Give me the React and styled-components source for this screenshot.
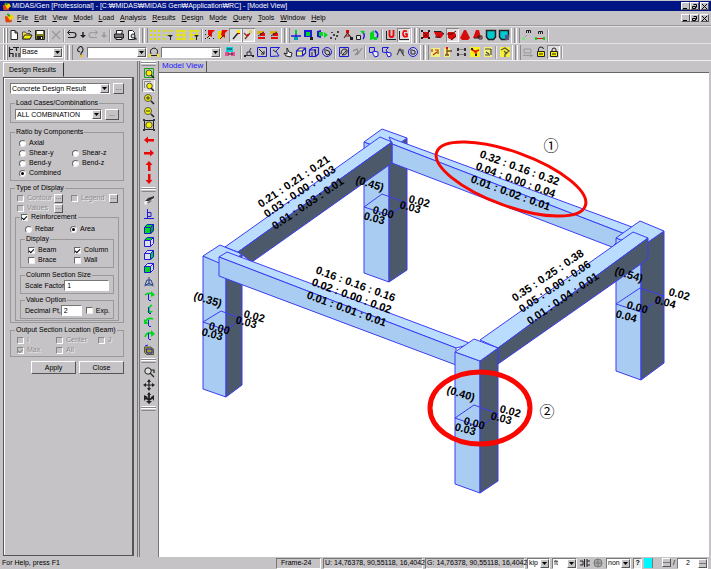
import React from "react";
import styled, { createGlobalStyle, css } from "styled-components";

const GlobalStyle = createGlobalStyle`
  * { box-sizing: border-box; }
  body { margin: 0; background: #c6c3c6; }
  body, button, input, select, legend {
    font-family: "Liberation Sans", "Noto Sans CJK KR", sans-serif;
    font-size: 7px;
    line-height: 8px;
    color: #000;
  }
`;

const face = "#c6c3c6";
const raised = css`border: 1px solid; border-color: #fff #555 #555 #fff;`;
const sunken = css`border: 1px solid; border-color: #777 #fff #fff #777;`;

const Shell = styled.div`
  display: flex;
  flex-direction: column;
  min-height: 100vh;
  background: ${face};
  padding-top: 1px;
`;

/* ---------- title and menu ---------- */
const TitleBar = styled.header`
  display: flex;
  align-items: center;
  height: 10px;
  padding: 0 2px;
  gap: 1px;
  background: #001484;
  color: #fff;
  white-space: nowrap;
`;
const Spacer = styled.span`flex: 1;`;
const WindowButtons = styled.div`display: flex;`;
const WindowButton = styled.button`
  ${raised}
  width: 9px;
  height: 8px;
  padding: 0;
  margin-left: ${(p) => (p.$apart ? 1 : 0)}px;
  background: ${face};
  display: grid;
  place-items: center;
`;
const MenuBar = styled.nav`
  display: flex;
  align-items: center;
  height: 15px;
  padding: 0 2px 0 4px;
  border-bottom: 1px solid #999;
`;
const MenuButton = styled.button`
  border: 0;
  padding: 0 3px;
  background: none;
  u { text-underline-offset: 1px; }
`;

/* ---------- toolbars ---------- */
const Toolbar = styled.div`
  display: flex;
  align-items: center;
  height: 17px;
  padding-left: 4px;
  border-top: 1px solid #e4e2e4;
`;
const Grip = styled.span`
  width: ${(p) => p.$w || 10}px;
  height: 15px;
  display: flex;
  justify-content: center;
  gap: 1px;
  &::before, &::after {
    content: "";
    width: 2px;
    border-left: 1px solid #fff;
    border-right: 1px solid #888;
  }
`;
const Separator = styled.span`
  width: 4px;
  height: 13px;
  background: linear-gradient(90deg, transparent 1px, #999 1px, #999 2px, #eee 2px, #eee 3px, transparent 3px);
`;
const Group = styled.div`
  display: flex;
  width: ${(p) => p.$w}px;
`;
const ToolButton = styled.button`
  flex: 1;
  min-width: 0;
  height: 14px;
  padding: 0;
  border: 0;
  background: none;
  display: grid;
  place-items: center;
  ${(p) => p.$on && css`background: #dedcde; box-shadow: inset 1px 1px #888, inset -1px -1px #fff;`}
  svg { display: block; }
`;

/* ---------- controls ---------- */
const SelectBox = styled.span`
  ${sunken}
  display: flex;
  width: ${(p) => p.$w}px;
  height: 11px;
  background: #fff;
`;
const NativeSelect = styled.select`
  appearance: none;
  flex: 1;
  min-width: 0;
  border: 0;
  padding: 0 1px;
  background: #fff;
  line-height: 8px;
  outline: none;
`;
const Arrow = styled.span`
  ${raised}
  width: 9px;
  background: ${face};
  display: grid;
  place-items: center;
  pointer-events: none;
`;
const tick = css`
  appearance: none;
  margin: 0;
  width: 7px;
  height: 7px;
  flex: none;
  border: 1px solid;
  border-color: #666 #eee #eee #666;
  background: #fff;
  display: grid;
  place-items: center;
`;
const Check = styled.input`
  ${tick}
  &:checked::before {
    content: "";
    width: 4px;
    height: 2px;
    border-left: 1px solid #000;
    border-bottom: 1px solid #000;
    transform: rotate(-45deg);
  }
  &:disabled { background: ${face}; border-color: #888 #fff #fff #888; }
  &:disabled:checked::before { border-color: #888; }
`;
const Radio = styled.input`
  ${tick}
  border-radius: 50%;
  &:checked::before {
    content: "";
    width: 3px;
    height: 3px;
    border-radius: 50%;
    background: #000;
  }
`;
const Option = styled.label`
  display: flex;
  align-items: center;
  gap: 3px;
  height: ${(p) => p.$h || 10}px;
  width: ${(p) => (p.$w ? p.$w + "px" : "auto")};
  color: ${(p) => (p.$off ? "#8e8b8e" : "#000")};
  text-shadow: ${(p) => (p.$off ? "1px 1px #eee" : "none")};
  white-space: nowrap;
`;
const SmallButton = styled.button`
  ${raised}
  width: ${(p) => p.$w || 11}px;
  height: ${(p) => p.$h || 11}px;
  padding: 0 0 2px;
  background: ${face};
  color: #555;
  line-height: 4px;
`;
const TextBox = styled.input`
  ${sunken}
  width: ${(p) => p.$w}px;
  height: 11px;
  padding: 0 2px;
  background: #fff;
`;

/* ---------- left panel ---------- */
const Work = styled.div`
  flex: 1;
  display: flex;
  min-height: 0;
  border-top: 1px solid #eee;
`;
const Side = styled.aside`
  width: 138px;
  display: flex;
  flex-direction: column;
  padding: 1px 3px;
  border-right: 1px solid #777;
`;
const SideTab = styled.button`
  align-self: flex-start;
  height: 15px;
  padding: 0 7px 0 5px;
  border: 1px solid;
  border-color: #fff #333 transparent #fff;
  background: ${face};
`;
const SidePage = styled.form`
  flex: 1;
  display: flex;
  flex-direction: column;
  padding: 5px 8px 0 6px;
  border: 1px solid #555;
  border-right-width: 2px;
  box-shadow: inset 1px 1px #fff;
`;
const Box = styled.fieldset`
  min-width: 0;
  margin: ${(p) => p.$mt || 0}px 0 0;
  padding: ${(p) => p.$pt || 2}px 4px ${(p) => p.$pb || 2}px;
  border: 1px solid #999;
`;
const Legend = styled.legend`
  height: 8px;
  padding: 0 1px;
  white-space: nowrap;
`;
const Row = styled.div`
  display: flex;
  align-items: center;
  gap: ${(p) => p.$gap || 0}px;
  padding-left: ${(p) => p.$pl || 0}px;
  margin-top: ${(p) => p.$mt || 0}px;
`;
const FieldLabel = styled.label`width: ${(p) => p.$w}px; white-space: nowrap;`;
const Actions = styled.div`
  display: flex;
  justify-content: flex-end;
  gap: 3px;
  margin-top: 4px;
`;
const ActionButton = styled.button`
  ${raised}
  width: 45px;
  height: 13px;
  padding: 0;
  background: ${face};
`;

/* ---------- vertical toolbar ---------- */
const Strip = styled.div`
  width: 20px;
  margin-left: 1px;
  padding: 0 3px 0 2px;
  border-left: 1px solid #777;
  border-right: 1px solid #777;
  display: flex;
  flex-direction: column;
  align-items: center;
`;
const StripGrip = styled.span`
  width: 15px;
  height: 5px;
  margin: ${(p) => p.$m || 0}px 0;
  border: 1px solid;
  border-color: #fff transparent #888;
  background: linear-gradient(#888 1px, #fff 1px, #fff 2px, transparent 2px);
`;
const StripButton = styled(ToolButton)`
  flex: none;
  width: 13px;
  height: 13px;
  margin-top: ${(p) => p.$mt || 0}px;
`;

/* ---------- model view ---------- */
const Main = styled.main`
  flex: 1;
  min-width: 0;
  display: flex;
  flex-direction: column;
  padding-right: 2px;
`;
const ViewTab = styled.button`
  align-self: flex-start;
  height: 11px;
  padding: 0 3px 1px 3px;
  border: 0;
  border-right: 1px solid #555;
  background: ${face};
  color: #1a1aff;
  font-size: 8px;
`;
const Canvas = styled.div`
  flex: 1;
  min-height: 0;
  background: #fff;
  border-top: 1px solid #666;
  svg { display: block; width: 100%; height: 100%; }
`;
const Mark = styled.text`
  font: 15px "Noto Sans CJK JP", sans-serif;
  text-anchor: middle;
`;
const Ratio = styled.text`
  font: bold 11px "Liberation Sans", sans-serif;
`;

/* ---------- status bar ---------- */
const Status = styled.footer`
  display: flex;
  align-items: center;
  height: 12px;
  padding: 0 3px 0 2px;
  gap: 2px;
  white-space: nowrap;
`;
const Pane = styled.span`
  ${sunken}
  width: ${(p) => p.$w}px;
  height: 11px;
  padding-left: ${(p) => p.$pl || 1}px;
`;
const QueryButton = styled.button`
  ${sunken}
  width: 9px;
  height: 11px;
  padding: 0;
  background: #eee;
  font-weight: bold;
`;
const Swatch = styled.span`
  width: 27px;
  height: 10px;
  display: flex;
  justify-content: flex-end;
  background: linear-gradient(90deg, #00f7ff 8px, #777 8px, #777 9px, ${face} 9px);
`;
const Spin = styled.span`
  ${raised}
  width: 9px;
  height: 9px;
  background: linear-gradient(${face} 3px, #777 3px, #777 4px, ${face} 4px);
`;
const CountBox = styled.span`
  ${sunken}
  display: flex;
  width: 31px;
  height: 11px;
  background: #fff;
`;
const CountInput = styled.input`
  flex: 1;
  min-width: 0;
  border: 0;
  padding: 0;
  text-align: center;
  background: #fff;
`;

/* ---------- icon drawings, 12 x 12 grid ---------- */
const B = "#1c1cd8";
const K = "#222";
const G = "#00d820";
const Y = "#f4f000";
const R = "#e80808";
const L = (d, c = K, w = 1, f = "none") => <path d={d} stroke={c} strokeWidth={w} fill={f} />;
const F = (d, c) => <path d={d} fill={c} />;
const lens = (sign) => (
  <>
    <circle cx="5" cy="5" r="3.5" fill={Y} stroke="#555" />
    {L("M8 8l3 3", K, 1.6)}
    {sign && L(sign, "#333")}
  </>
);
const cube = (front, top, side) => (
  <>
    {F("M1 4h7v7H1z", front)}{F("M1 4l3-3h7L8 4z", top)}{F("M8 4l3-3v7l-3 3z", side)}
    {L("M1.5 4.5h6v6h-6zM1.5 4.5l3-3h6v6l-3 3M7.5 4.5l3-3", B)}
  </>
);
const bow = (d, tip) => <>{L(d, G, 1.6)}{F(tip, G)}{L("M5.5 4v6M6 10.5h2", B)}</>;
const redBox = "#d80c0c";
const nodes = F("M1 1h2v2H1zM8 1h2v2H8zM1 8h2v2H1zM8 8h2v2H8z", K);
const hand = L("M4 10l-2-3 3 1V2l2 4 3 1-1 4z", K, 1, "#eee");

const icons = {
  app: <>{F("M1 4h9l-1 7H2z", "#e04010")}{F("M3 2h7l2 4-5 3z", "#ffd000")}{L("M4 1l3 3", "#18a018", 2)}</>,
  fresh: L("M3 1.5h4l2.5 2.5v6.5h-6.5zM7 1.5v2.5h2.5", K, 1, "#fff"),
  open: <>{L("M1.5 3h3l1 1.5h3.5V10h-7.5z", "#555", 1, "#ffd84a")}{L("M1.5 10l2-4h7.5l-2 4z", K, 1, Y)}{L("M7 2q2-1 3 1", K)}</>,
  save: <>{L("M1.5 1.5h9v9h-9z", K, 1, "#7d7d20")}{F("M3 2h6v3H3z", "#fff")}{F("M3 7h6v4H3z", K)}{F("M7 8h1v2H7z", "#fff")}</>,
  cut: L("M2 2l8 8M10 2l-8 8", "#999", 1.2),
  undo: <>{L("M2 3.500h5q3 0 3 2.500t-3 2.500H2", K, 1.2)}{L("M4 1L1.5 3.500 4 6", K)}</>,
  redo: <>{L("M10 3.500H5q-3 0-3 2.500t3 2.500h5", "#999", 1.2)}{L("M8 1l2.5 2.500L8 6", "#999")}</>,
  drop: <>{F("M3 6h6L6 9z", K)}{L("M6 3v4", K, 1.5)}</>,
  dropOff: <>{F("M3 6h6L6 9z", "#999")}{L("M6 3v4", "#999", 1.5)}</>,
  print: <>{L("M3.5 5V1.5h6L8.5 5", K, 1, "#fff")}{L("M1.5 5h9v4h-9z", K, 1, "#777")}{L("M3 8.5h6v2H3z", K, 1, "#ddd")}</>,
  preview: <>{L("M2.5 1.5h4l2 2v7h-6z", K, 1, "#fff")}<circle cx="7" cy="7" r="2" fill="#cde" stroke={K} />{L("M8.5 8.5l2 2", K, 1.5)}</>,
  grid: F("M1 1h2v2H1zM5 1h2v2H5zM9 1h2v2H9zM1 5h2v2H1zM5 5h2v2H5zM9 5h2v2H9zM1 9h2v2H1zM5 9h2v2H5zM9 9h2v2H9z", "#dede00"),
  gridPick: <>{F("M1 1h2v2H1zM5 1h2v2H5zM9 1h2v2H9zM1 5h2v2H1zM1 9h2v2H1zM5 5h2v2H5z", "#dede00")}{F("M5 6h6L9 8v3H8V8z", K)}</>,
  lines: L("M1 2h10M1 6h10M1 10h10M3 1v10M9 1v10", "#e8e800", 1.4),
  linesPick: <>{L("M1 2h10M1 6h10M1 10h6M3 1v10M9 1v5", "#e8e800", 1.4)}{F("M6 6h5L9 8v3H8V8z", K)}</>,
  snapA: <>{F("M1 1h1v1H1zM1 5h1v1H1zM1 9h1v1H1zM5 9h1v1H5zM9 9h1v1H9z", K)}{F("M4 1h7L8 4v4L4 6z", R)}{L("M3 9l4-4", "#800")}</>,
  snapB: <>{F("M1 2h4v8H1z", "#dede00")}{F("M5 1h6L8 4v5L4 6z", R)}{L("M3 10l4-4", "#800")}</>,
  wand: <>{L("M3 10l5-6", K, 1.4)}{F("M7 1h3v3H7z", Y)}{F("M8 4h2v1H8z", R)}</>,
  wand2: <>{L("M3 10l5-6M2 4l3 3", "#7a4020", 1.4)}{F("M7 1h3v3H7z", "#e8d060")}{F("M5 5h2v2H5z", R)}</>,
  keyA: <>{F("M2 2h7v3H2z", "#d8b018")}{F("M5 4h5v3H5zM3 8h7v2H3z", R)}{L("M3 7l6-4", K)}</>,
  axes: <>{L("M6 1v9M1 7h10", B, 1.3)}{L("M6 1v4", G, 2)}{F("M4 8h4v3H4z", "#00a0b0")}</>,
  zone: <>{F("M1 1h8v7H1z", B)}{F("M3 3h4v4H3z", G)}{F("M7 8h3v3H7z", K)}</>,
  move: <>{F("M1 2l4-1v8l-4-1z", B)}{F("M3 3h4v4H3zM8 3l4 3-4 3z", G)}</>,
  dots: F("M1 8h2v2H1zM4 5h2v2H4zM2 3h2v1H2zM8 2h2v2H8zM7 6h2v2H7zM6 9h1v2H6z", "#444"),
  person: <>{F("M4 1h3v3H4z", "#d00")}{L("M5.5 4L2 9M5.5 4l4 5M3 7h5", "#6a2020", 1.2)}{F("M8 8h3v3H8z", K)}</>,
  turn: <>{L("M1.5 6.5h4v4h-4z", K, 1, "#ddd")}{L("M8 10q3-4-1-8", B, 1.4)}{F("M5 2h5L8 5z", G)}</>,
  mirror: <>{F("M2 4l4-3v9l-4 1z", G)}{L("M7 2q5 3 1 8", B, 1.5)}{F("M6 8h3v3H6z", G)}</>,
  U: <>{L("M1.5 2v8.5H11", K)}{L("M4.5 1v5q0 2 2 2t2-2V1", R, 1.8)}</>,
  Gr: <>{L("M1.5 2v8.5H11", K)}{L("M9 2.5q-4-2-4 2t4 3V5H7", R, 1.7)}</>,
  rd1: <>{F("M3 3h6v6H3z", redBox)}{nodes}{L("M2 2l8 8M10 2l-8 8", "#500", 0.7)}</>,
  rd2: <>{F("M1 3h7l3 2-3 4H4z", redBox)}{L("M1 2.5h7l3 2.5M2 8h5", K)}</>,
  rd3: <>{F("M2 3h5l3 2v3l-4 3-4-2z", redBox)}{L("M1 5h5l4-3M5 11l5-4", "#600")}</>,
  rd4: F("M5 1h2l4 8-2 2H3L1 9z", redBox),
  rd5: <>{F("M4 1h3l2 8H1z", redBox)}{L("M6 7h4v3H7zM2 9h5", K)}</>,
  screen: L("M1.5 1.5h9v6.5l-2 2.5h-5l-2-2.5z", K, 1.5, "#00c8d0"),
  screen2: <>{L("M1.5 1.5h9v6.5l-2 2.5h-5l-2-2.5z", K, 1.5, "#00c8d0")}{F("M7 6h4v5H7z", "#558")}</>,
  nA: <>{L("M5.500 4V1.500M5.500 1.500h4V4M7.500 1.500V4", K)}{F("M1 8h3v3H1z", "#8d8")}{L("M4 8l2-2", "#999")}</>,
  nB: <>{L("M4.500 5V2.500M4.500 2.500h4V5M6.500 2.500V5", K)}{F("M1 8h2v3H1zM9 8h2v3H9z", G)}{L("M3 9.5h6", R)}</>,
  tree: L("M1.500 1v10M2 3.5h3M2 7.5h3M5 1.5h6M8.5 2v3M5 7v4M8 7v4M11 7v4", K, 1.2),
  node: <>{L("M6 9V7q3-2 1.5-5t-4 0T5 6", K, 1.1)}{F("M5 9h2v2H5z", "#ffb800")}</>,
  elem: <>{L("M3 8q-2-5 3-6 5 1 3 6", K)}{L("M1 9.5h10", K)}{F("M1 8h2v3H1zM9 8h2v3H9z", "#f8e000")}</>,
  group: <>{F("M2 1h7v5H2z", "#00d0e0")}{F("M1 6h4v4H1zM7 6h4v4H7z", "#e85090")}{L("M3 3h5M4 8h5", K)}</>,
  s1: <>{L("M1 9.5h10M4 9V6h4v3M6 6l2-4", "#334")}{F("M1 9h2v2H1zM9 9h2v2H9z", K)}</>,
  s2: <>{L("M1.5 1.5h9v9h-9z", B)}{L("M3 3l5 5M8 5v3H5", K)}</>,
  s3: <>{L("M1.5 10.5V1.5h9L7 5l3 5z", B)}{L("M4 4l3 2", K)}</>,
  s4: hand,
  s5: L("M1.5 5h6v5h-6zM1.5 5l3-3h6v5l-3 3M7.5 5l3-3", B, 1.2, "#f0f080"),
  s6: <>{L("M1.5 4h6v6.5h-6zM1.5 4l3-2.5h6V8l-3 2.5", B, 1.2)}{L("M4 6v4M7 3v4", K)}</>,
  s7: <><circle cx="6" cy="6" r="4.5" fill="none" stroke={B} />{L("M4 3v4l2 2 3-1-1-3-3-1", K)}</>,
  s8: <>{L("M1.5 1.5h9v9h-9z", B)}{L("M3 8q0-5 4-5t-3 6q6 0 5-5", K)}</>,
  s9: L("M2 5l4-2 1 3-3 3M6 9l5-7", "#888", 1.1),
  s10: <>{L("M1.5 1.5h5v5h-5z", B)}{L("M5 5l5 1v4l-3 1-2-3z", B, 1, "#eee")}</>,
  s11: <>{L("M1.5 6V1.5h6L5 4l2 3z", B)}{L("M5 6l5 1v3l-3 1z", B, 1, "#eee")}</>,
  s12: L("M3 9l3-6 2 4 2 3M4 4h5v5", "#444", 1.1),
  s13: <><circle cx="6" cy="6" r="4.5" fill="#ccd" stroke={B} />{L("M4 3v5h4V5L5 4", K)}</>,
  y1: <>{F("M1 2h9v9H1z", "#f4f078")}{L("M2 3v3M5 4h3v4M3 9l4-3", "#a33", 1.2)}</>,
  y2: <>{F("M1 2h6v9H1z", "#f4f078")}{L("M4 2v7M4 5h5M2 9h4", "#743", 1.3)}{F("M3 1h2v2H3z", R)}</>,
  y3: <>{F("M1 2h2v3H1zM8 2h2v3H8zM1 7h2v3H1zM8 7h2v3H8z", "#333")}{L("M3 3.5h5M3 8.500h5", "#888")}</>,
  y4: <>{F("M1 1h10v10H1z", "#f8f020")}{L("M2 3l5 3v4M5 6l5-2", R, 1.5)}{F("M2 2h2v2H2zM6 8h2v2H6z", K)}</>,
  y5: <>{F("M2 1h8v10H2z", "#f4f078")}{L("M3 3h6M4 6l3 2M3 9h5M9 3v6", "#444", 1.2)}</>,
  y6: <>{F("M1 1h10v10H1z", "#f8f040")}{L("M2 4l4-2 4 3-4 3v3M5 5l3 3", "#553", 1.3)}</>,
  cart: L("M2 3h7v4H2zM1 9.5h10M8 8l2 1.5L8 11", "#999"),
  unlock: <>{L("M3.5 5V3q0-2 2.5-2t2.5 2", K)}{L("M2.5 5.5h7v5h-7z", K, 1, Y)}{L("M4 8h4", K)}</>,
  lock: <>{L("M4 6V4q0-2 2-2t2 2v2", K)}{L("M2.5 5.5h7v5h-7z", K, 1, Y)}{L("M4 8h4", K)}</>,
  zFit: <>{L("M1.5 1.5h9v9h-9z", "#18a018")}<circle cx="6" cy="6" r="3" fill={Y} stroke="#554" />{L("M8 8l3 3", K, 1.5)}</>,
  zWin: <>{L("M1.5 8V1.5H8", "#888")}<circle cx="6.5" cy="6" r="2.8" fill={Y} stroke="#554" />{L("M8 8l3 3", K, 1.5)}</>,
  zIn: lens("M3 5h4M5 3v4"),
  zOut: lens("M3 5h4"),
  zAll: <>{L("M1.5 1.5h9v9h-9z", K)}<circle cx="6" cy="6" r="3.2" fill={Y} stroke="#554" />{F("M0 0h2v2H0zM10 0h2v2h-2zM0 10h2v2H0zM10 10h2v2h-2z", "#335")}</>,
  left: F("M1 6l4-3.5V5h6v2.5H5v2z", R),
  right: F("M11 6L7 2.5V5H1v2.5h6v2z", R),
  up: F("M6 1L2.5 5H5v6h2.5V5h2z", R),
  down: F("M6 11L2.5 7H5V1h2.5v6h2z", R),
  iso: <>{F("M1 8l2-4 7-3 1 2-4 5-5 2z", "#eee")}{F("M2 6l3-3 6-2v2L6 6z", "#333")}{F("M4 7l4-2 1 1-4 3z", "#777")}</>,
  front: L("M4.5 1v9M5 4.5h3v4H5M1 10.5h10", B),
  c1: cube(G, G, "#00a818"),
  c2: cube("#dde", G, "#dde"),
  c3: cube("#dde", "#dde", G),
  c4: cube(G, "#dde", "#dde"),
  tri: L("M6 1v6L1.5 10M6 7l4.500 3M4 4l-2 5h8L8 4z", "#224488"),
  b1: bow("M2 5q3-3 8-1", "M8 1l4 4-4 2z"),
  b2: bow("M9 2q-5 3-2 7", "M4 8h6L7 11z"),
  b3: bow("M10 3q-5-2-8 3", "M1 3v5h5z"),
  b4: bow("M2 8q1-5 7-4", "M8 1l4 4-4 3z"),
  bag: <>{L("M1.5 3h6l3 2v5.5h-7l-2-2z", "#554", 1, "#a8a020")}{L("M3 5h6v4H4zM2 2l3-1", B)}</>,
  zDyn: <><circle cx="5" cy="5" r="3.2" fill="#ddd" stroke={K} />{L("M7 7l4 4M8 4h3v3", K, 1.2)}</>,
  pan: <>{L("M6 2v8M2 6h8", K, 1.2)}{F("M6 0l2 3H4zM6 12l2-3H4zM0 6l3-2v4zM12 6L9 4v4z", K)}</>,
  rot: <>{L("M6 1v10M2 5q4 5 8 0", K, 1.8)}{F("M6 0l2 3H4zM6 12l3-3H3zM1 3l4 2-4 4zM11 3v6L8 5z", K)}</>,
  link: L("M1 4h3v4H1M5.500 2v8M8 2v8M8 4h3M8 8h3", K),
  globe: <><circle cx="6" cy="6" r="4" fill="#aaa" stroke="#777" />{L("M2 6h8M6 2v8", "#777")}</>,
};

const Icon = ({ name, size = 12 }) => (
  <svg width={size} height={size} viewBox="0 0 12 12" aria-hidden="true">{icons[name]}</svg>
);
const Tools = ({ w, names, on = [] }) => (
  <Group $w={w}>
    {names.split(" ").map((n, i) => (
      <ToolButton key={i} type="button" aria-label={n} $on={on.includes(i)}><Icon name={n} /></ToolButton>
    ))}
  </Group>
);
const DropDown = ({ w, value, label }) => (
  <SelectBox $w={w}>
    <NativeSelect aria-label={label} defaultValue={value}><option>{value}</option></NativeSelect>
    <Arrow><svg width="5" height="3" viewBox="0 0 5 3"><path d="M0 0h5L2.5 3z" /></svg></Arrow>
  </SelectBox>
);
const WinButtons = () => (
  <WindowButtons>
    <WindowButton aria-label="Minimize"><svg width="5" height="5"><path d="M0 4h4v1H0z" /></svg></WindowButton>
    <WindowButton aria-label="Restore"><svg width="5" height="5"><path d="M1.5 .5h3v3M.5 2.5h3v2h-3z" fill="none" stroke="#000" /></svg></WindowButton>
    <WindowButton aria-label="Close" $apart><svg width="5" height="5"><path d="M0 0l5 5M5 0L0 5" stroke="#000" /></svg></WindowButton>
  </WindowButtons>
);
const CheckItem = ({ children, checked, off, w, h }) => (
  <Option $w={w} $h={h} $off={off}><Check type="checkbox" defaultChecked={checked} disabled={off} />{children}</Option>
);
const RadioItem = ({ children, checked, name, w }) => (
  <Option $w={w}><Radio type="radio" name={name} defaultChecked={checked} />{children}</Option>
);

const menus = [
  ["", "F", "ile"], ["", "E", "dit"], ["", "V", "iew"], ["", "M", "odel"], ["", "L", "oad"],
  ["", "A", "nalysis"], ["", "R", "esults"], ["", "D", "esign"], ["M", "o", "de"], ["", "Q", "uery"],
  ["", "T", "ools"], ["", "W", "indow"], ["", "H", "elp"],
];

/* ---------- frame model ---------- */
const light = "#a9ccf2";
const top = "#b9dcff";
const dark = "#4b596b";
const shapes = [
  ["364,142 389,151 389,282 364,273", light],
  ["389,151 407,138 407,270 389,282", dark],
  ["382,129 407,138 389,151 364,142", top],
  ["389,137 396,140 632,227 625,234 392,144", top],
  ["392,144 625,234 612,247 392,163", light],
  ["203,256 226,265 226,397 203,389", light],
  ["226,265 242,253 242,385 226,397", dark],
  ["220,245 242,254 226,266 203,256", top],
  ["225,247 380,137 392,142 238,252", top],
  ["238,252 392,142 392,163 252,262", dark],
  ["219,257 227,252 472,344 456,348", top],
  ["219,257 456,348 456,365 219,276", light],
  ["616,238 641,247 641,380 616,371", light],
  ["641,247 664,231 664,363 641,380", dark],
  ["640,221 664,231 641,247 616,238", top],
  ["480,340 633,232 648,238 498,348", top],
  ["498,348 648,238 648,259 498,364", dark],
  ["455,352 480,361 480,493 455,484", light],
  ["480,361 498,348 498,481 480,493", dark],
  ["474,339 498,348 480,361 455,352", top],
];
const sections = [
  "364,207 382,194 407,203 389,215",
  "203,322 221,311 242,319 226,330",
  "616,304 640,288 664,296 641,312",
  "455,418 474,405 498,414 480,427",
];
const ratios = [
  [479, 157, 20, "0.32 : 0.16 : 0.32"], [475, 169, 20, "0.04 : 0.00 : 0.04"], [470, 182, 20, "0.01 : 0.02 : 0.01"],
  [261, 208, -34, "0.21 : 0.21 : 0.21"], [267, 218, -34, "0.03 : 0.00 : 0.03"], [275, 230, -34, "0.01 : 0.03 : 0.01"],
  [315, 273, 20, "0.16 : 0.16 : 0.16"], [311, 285, 20, "0.02 : 0.00 : 0.02"], [306, 298, 20, "0.01 : 0.01 : 0.01"],
  [515, 302, -34, "0.35 : 0.25 : 0.38"], [522, 313, -34, "0.05 : 0.00 : 0.06"], [530, 325, -34, "0.01 : 0.04 : 0.01"],
  [355, 183, 17, "(0.45)"], [408, 202, 15, "0.02"], [399, 208, 15, "0.03"], [372, 213, 15, "0.00"], [363, 219, 15, "0.03"],
  [193, 299, 17, "(0.35)"], [243, 317, 15, "0.02"], [235, 323, 15, "0.03"], [208, 329, 15, "0.00"], [201, 335, 15, "0.03"],
  [614, 274, 17, "(0.54)"], [668, 295, 15, "0.02"], [654, 303, 15, "0.04"], [626, 308, 15, "0.00"], [615, 317, 15, "0.04"],
  [446, 393, 17, "(0.40)"], [499, 412, 15, "0.02"], [490, 419, 15, "0.03"], [463, 424, 15, "0.00"], [454, 430, 15, "0.03"],
];
const Model = () => (
  <svg viewBox="159 73 550 484" role="img" aria-label="Frame model with design ratios">
    {shapes.map(([p, c]) => <polygon key={p} points={p} fill={c} stroke="#3c3cf4" strokeWidth="1" />)}
    {sections.map((p) => <polygon key={p} points={p} fill="none" stroke="#3c3cf4" strokeWidth="1" />)}
    {ratios.map(([x, y, a, t], i) => <Ratio key={i} transform={`translate(${x} ${y}) rotate(${a})`}>{t}</Ratio>)}
    <ellipse cx="511" cy="179" rx="79" ry="27" transform="rotate(20 511 179)" fill="none" stroke="#f80800" strokeWidth="3" />
    <ellipse cx="480" cy="408" rx="50" ry="36" fill="none" stroke="#f80800" strokeWidth="5" />
    <Mark x="551" y="151">①</Mark>
    <Mark x="547" y="417">②</Mark>
  </svg>
);

/* name, space above, pressed; null is a grip */
const strip = [
  ["zFit"], ["zWin", 0, true], ["zIn"], ["zOut"], ["zAll"], ["left", 2], ["right"], ["up"], ["down"], null,
  ["iso"], ["front"], ["c1", 2], ["c2"], ["c3"], ["c4"], ["tri", 1], ["b1", 1], ["b2"], ["b3"], ["b4"], ["bag", 2], null,
  ["zDyn"], ["pan"], ["rot"],
];

export default function App() {
  return (
    <Shell>
      <GlobalStyle />
      <TitleBar>
        <Icon name="app" size={9} />
        <span>MIDAS/Gen [Professional] - [C:₩MIDAS₩MIDAS Gen₩Application₩RC] - [Model View]</span>
        <Spacer />
        <WinButtons />
      </TitleBar>
      <MenuBar>
        <Icon name="app" size={10} />
        {menus.map(([a, u, b]) => <MenuButton key={u + b}>{a}<u>{u}</u>{b}</MenuButton>)}
        <Spacer />
        <WinButtons />
      </MenuBar>
      <Toolbar>
        <Grip $w={3} />
        <Tools w={39} names="fresh open save" />
        <Separator />
        <Tools w={12} names="cut" />
        <Separator />
        <Tools w={42} names="undo drop redo dropOff" />
        <Separator />
        <Tools w={26} names="print preview" />
        <Grip />
        <Tools w={52} names="grid gridPick lines linesPick" />
        <Separator />
        <Tools w={76} names="snapA snapB wand wand2 keyA keyA" on={[2, 3]} />
        <Grip />
        <Tools w={90} names="axes zone move dots person turn mirror" />
        <Separator />
        <Tools w={26} names="U Gr" on={[1]} />
        <Grip />
        <Tools w={90} names="rd1 rd2 rd3 rd4 rd5 screen screen2" on={[2]} />
        <Grip />
        <Tools w={26} names="nA nB" />
        <Separator />
      </Toolbar>
      <Toolbar>
        <Grip $w={3} />
        <Tools w={13} names="tree" />
        <DropDown w={43} value="Base" label="Stage" />
        <Grip $w={11} />
        <Tools w={13} names="node" />
        <DropDown w={60} value="" label="Nodes" />
        <Tools w={14} names="elem" />
        <DropDown w={60} value="" label="Elements" />
        <Tools w={18} names="group" />
        <Separator />
        <Tools w={90} names="s1 s2 s3 s4 s5 s6 s7" />
        <Separator />
        <Tools w={26} names="s8 s9" />
        <Separator />
        <Tools w={52} names="s10 s11 s12 s13" />
        <Grip />
        <Tools w={65} names="y1 y2 y3 y4 y5" />
        <Separator />
        <Tools w={13} names="y6" />
        <Grip />
        <Tools w={39} names="cart unlock lock" on={[2]} />
        <Separator />
      </Toolbar>
      <Work>
        <Side>
          <SideTab>Design Results</SideTab>
          <SidePage onSubmit={(e) => e.preventDefault()}>
            <Row $gap={3}>
              <DropDown w={101} value="Concrete Design Result" label="Result type" />
              <SmallButton type="button">...</SmallButton>
            </Row>
            <Box $mt={5}>
              <Legend>Load Cases/Combinations</Legend>
              <Row $gap={3}>
                <DropDown w={87} value="ALL COMBINATION" label="Load combination" />
                <SmallButton type="button" $w={14}>...</SmallButton>
              </Row>
            </Box>
            <Box $mt={5}>
              <Legend>Ratio by Components</Legend>
              <Row $pl={4}><RadioItem name="ratio">Axial</RadioItem></Row>
              <Row $pl={4}><RadioItem name="ratio" w={53}>Shear-y</RadioItem><RadioItem name="ratio">Shear-z</RadioItem></Row>
              <Row $pl={4}><RadioItem name="ratio" w={53}>Bend-y</RadioItem><RadioItem name="ratio">Bend-z</RadioItem></Row>
              <Row $pl={4}><RadioItem name="ratio" checked>Combined</RadioItem></Row>
            </Box>
            <Box $mt={3} $pt={1} $pb={1}>
              <Legend>Type of Display</Legend>
              <Row $pl={2}>
                <CheckItem off w={37}>Contour</CheckItem><SmallButton type="button" $w={9} $h={9}>...</SmallButton>
                <Row $pl={8}><CheckItem off w={38}>Legend</CheckItem><SmallButton type="button" $w={9} $h={9}>...</SmallButton></Row>
              </Row>
              <Row $pl={2}><CheckItem off w={37}>Values</CheckItem><SmallButton type="button" $w={9} $h={9}>...</SmallButton></Row>
              <Box $pb={1}>
                <Legend><CheckItem checked h={8}>Reinforcement</CheckItem></Legend>
                <Row $pl={5} $mt={1}><RadioItem name="bar" w={45}>Rebar</RadioItem><RadioItem name="bar" checked>Area</RadioItem></Row>
                <Box $mt={1}>
                  <Legend>Display</Legend>
                  <Row $pl={3}><CheckItem w={46} checked>Beam</CheckItem><CheckItem checked>Column</CheckItem></Row>
                  <Row $pl={3}><CheckItem w={46}>Brace</CheckItem><CheckItem>Wall</CheckItem></Row>
                </Box>
                <Box $mt={3} $pt={1}>
                  <Legend>Column Section Size</Legend>
                  <Row><FieldLabel $w={47} htmlFor="scale">Scale Factor</FieldLabel><TextBox id="scale" $w={45} defaultValue="1" /></Row>
                </Box>
                <Box $mt={2} $pt={1}>
                  <Legend>Value Option</Legend>
                  <Row><FieldLabel $w={41} htmlFor="decimal">Decimal Pt,</FieldLabel><TextBox id="decimal" $w={21} defaultValue="2" /><Row $pl={4}><CheckItem>Exp.</CheckItem></Row></Row>
                </Box>
              </Box>
            </Box>
            <Box $mt={3} $pt={1} $pb={1}>
              <Legend>Output Section Location (Beam)</Legend>
              <Row $pl={2}><CheckItem off w={39}>I</CheckItem><CheckItem off w={42}>Center</CheckItem><CheckItem off>J</CheckItem></Row>
              <Row $pl={2}><CheckItem off checked w={39}>Max</CheckItem><CheckItem off>All</CheckItem></Row>
            </Box>
            <Actions>
              <ActionButton>Apply</ActionButton>
              <ActionButton type="button">Close</ActionButton>
            </Actions>
          </SidePage>
        </Side>
        <Strip>
          <StripGrip />
          {strip.map((s, i) => s
            ? <StripButton key={i} $mt={s[1]} $on={s[2]} aria-label={s[0]}><Icon name={s[0]} /></StripButton>
            : <StripGrip key={i} $m={2} />)}
          <StripGrip $m={2} />
        </Strip>
        <Main>
          <ViewTab>Model View</ViewTab>
          <Canvas><Model /></Canvas>
        </Main>
      </Work>
      <Status>
        <span>For Help, press F1</span>
        <Spacer />
        <Pane $w={45} $pl={4}>Frame-24</Pane>
        <Pane $w={100}>U: 14,76378, 90,55118, 16,4042</Pane>
        <Pane $w={100}>G: 14,76378, 90,55118, 16,4042</Pane>
        <DropDown w={23} value="kip" label="Force unit" />
        <DropDown w={25} value="ft" label="Length unit" />
        <Tools w={25} names="link globe" />
        <DropDown w={25} value="non" label="Filter" />
        <QueryButton>?</QueryButton>
        <Swatch><Spin /></Swatch>
        <span>/</span>
        <CountBox><CountInput aria-label="Count" defaultValue="2" /><Spin /></CountBox>
      </Status>
    </Shell>
  );
}
